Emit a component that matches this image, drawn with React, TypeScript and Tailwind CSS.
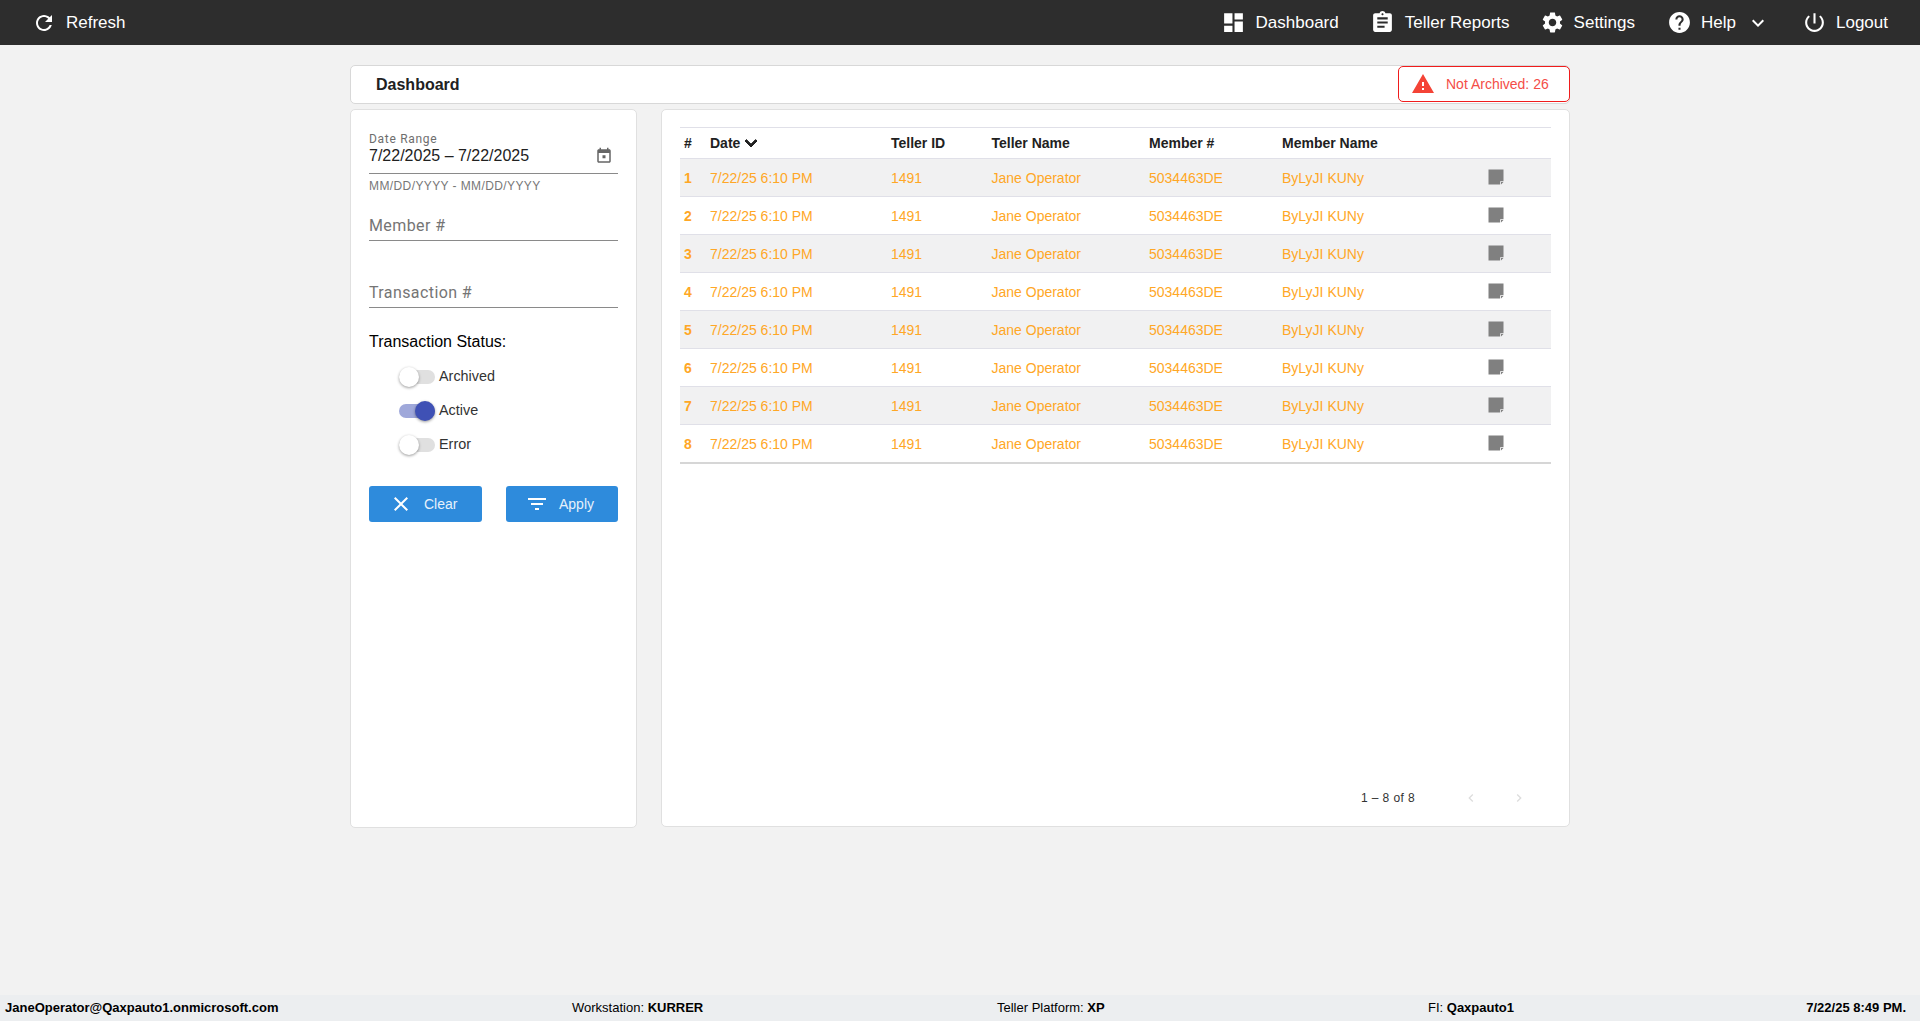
const icons = {
  refresh:
    "M17.65 6.35C16.2 4.9 14.21 4 12 4c-4.42 0-7.99 3.58-7.99 8s3.57 8 7.99 8c3.73 0 6.84-2.55 7.73-6h-2.08c-.82 2.33-3.04 4-5.65 4-3.31 0-6-2.69-6-6s2.69-6 6-6c1.66 0 3.14.69 4.22 1.78L13 11h7V4l-2.35 2.35z",
  dashboard: "M3 13h8V3H3v10zm0 8h8v-6H3v6zm10 0h8V11h-8v10zm0-18v6h8V3h-8z",
  assignment:
    "M19 3h-4.18C14.4 1.84 13.3 1 12 1c-1.3 0-2.4.84-2.82 2H5c-1.1 0-2 .9-2 2v14c0 1.1.9 2 2 2h14c1.1 0 2-.9 2-2V5c0-1.1-.9-2-2-2zm-7 0c.55 0 1 .45 1 1s-.45 1-1 1-1-.45-1-1 .45-1 1-1zm2 14H7v-2h7v2zm3-4H7v-2h10v2zm0-4H7V7h10v2z",
  settings:
    "M19.14 12.94c.04-.3.06-.61.06-.94 0-.32-.02-.64-.07-.94l2.03-1.58c.18-.14.23-.41.12-.61l-1.92-3.32c-.12-.22-.37-.29-.59-.22l-2.39.96c-.5-.38-1.03-.7-1.62-.94l-.36-2.54c-.04-.24-.24-.41-.48-.41h-3.84c-.24 0-.43.17-.47.41l-.36 2.54c-.59.24-1.13.57-1.62.94l-2.39-.96c-.22-.08-.47 0-.59.22L2.74 8.87c-.12.21-.08.47.12.61l2.03 1.58c-.05.3-.09.63-.09.94s.02.64.07.94l-2.03 1.58c-.18.14-.23.41-.12.61l1.92 3.32c.12.22.37.29.59.22l2.39-.96c.5.38 1.03.7 1.62.94l.36 2.54c.05.24.24.41.48.41h3.84c.24 0 .44-.17.47-.41l.36-2.54c.59-.24 1.13-.56 1.62-.94l2.39.96c.22.08.47 0 .59-.22l1.92-3.32c.12-.22.07-.47-.12-.61l-2.01-1.58zM12 15.6c-1.98 0-3.6-1.62-3.6-3.6s1.62-3.6 3.6-3.6 3.6 1.62 3.6 3.6-1.62 3.6-3.6 3.6z",
  help: "M12 2C6.48 2 2 6.48 2 12s4.48 10 10 10 10-4.48 10-10S17.52 2 12 2zm1 17h-2v-2h2v2zm2.07-7.75l-.9.92C13.45 12.9 13 13.5 13 15h-2v-.5c0-1.1.45-2.1 1.17-2.83l1.24-1.26c.37-.36.59-.86.59-1.41 0-1.1-.9-2-2-2s-2 .9-2 2H8c0-2.21 1.79-4 4-4s4 1.79 4 4c0 .88-.36 1.68-.93 2.25z",
  down: "M16.59 8.59L12 13.17 7.41 8.59 6 10l6 6 6-6z",
  power:
    "M13 3h-2v10h2V3zm4.83 2.17l-1.42 1.42C17.99 7.86 19 9.81 19 12c0 3.87-3.13 7-7 7s-7-3.13-7-7c0-2.19 1.01-4.14 2.58-5.42L6.17 5.17C4.23 6.82 3 9.26 3 12c0 4.97 4.03 9 9 9s9-4.03 9-9c0-2.74-1.23-5.18-3.17-6.83z",
  warning: "M1 21h22L12 2 1 21zm12-3h-2v-2h2v2zm0-4h-2v-4h2v4z",
  calendar:
    "M19 3h-1V1h-2v2H8V1H6v2H5c-1.11 0-1.99.9-1.99 2L3 19c0 1.1.89 2 2 2h14c1.1 0 2-.9 2-2V5c0-1.1-.9-2-2-2zm0 16H5V8h14v11zM10 11h4v4h-4z",
  close:
    "M19 6.41L17.59 5 12 10.59 6.41 5 5 6.41 10.59 12 5 17.59 6.41 19 12 13.41 17.59 19 19 17.59 13.41 12z",
  filter: "M10 18h4v-2h-4v2zM3 6v2h18V6H3zm3 7h12v-2H6v2z",
  note: "M3 3h18v14h-4v4H3z M18 18h3l-3 3z",
  left: "M15.41 7.41L14 6l-6 6 6 6 1.41-1.41L10.83 12z",
  right: "M10 6L8.59 7.41 13.17 12l-4.58 4.59L10 18l6-6z",
};

function Icon({ d, className }: { d: string; className: string }) {
  return (
    <svg viewBox="0 0 24 24" fill="currentColor" className={className}>
      <path d={d} />
    </svg>
  );
}

function NavItem({ d, label, wide }: { d: string; label: string; wide?: boolean }) {
  return (
    <div className={wide ? "flex items-center gap-[10px]" : "flex items-center gap-[9px]"}>
      <Icon d={d} className="w-[25px] h-[25px] text-white" />
      <span>{label}</span>
    </div>
  );
}

function Toggle({ label, on }: { label: string; on?: boolean }) {
  return (
    <div className="flex items-center h-[34px]">
      <div
        className={
          on
            ? "relative w-9 h-[14px] rounded-full bg-[#9fa8da]"
            : "relative w-9 h-[14px] rounded-full bg-[#e0e0e0]"
        }
      >
        <div
          className={
            on
              ? "absolute right-0 -top-[3px] w-5 h-5 rounded-full bg-[#3f51b5] shadow-[0_1px_3px_rgba(0,0,0,0.4)]"
              : "absolute left-0 -top-[3px] w-5 h-5 rounded-full bg-white shadow-[0_1px_3px_rgba(0,0,0,0.4)]"
          }
        />
      </div>
      <span className="ml-1 text-[14.4px] text-[#333]">{label}</span>
    </div>
  );
}

const rows = [1, 2, 3, 4, 5, 6, 7, 8];

export default function App() {
  return (
    <div className="h-[1021px] flex flex-col bg-[#f2f2f2] font-['Liberation_Sans',Arial,sans-serif] overflow-hidden">
      <header className="h-[45px] shrink-0 bg-[#2d2d2d] text-white text-[17px] flex items-center justify-between pl-[32px] pr-[32px]">
        <div className="flex items-center gap-[10px]">
          <Icon d={icons.refresh} className="w-6 h-6" />
          <span>Refresh</span>
        </div>
        <div className="flex items-center">
          <NavItem d={icons.dashboard} label="Dashboard" wide />
          <div className="ml-[31px]">
            <NavItem d={icons.assignment} label="Teller Reports" wide />
          </div>
          <div className="ml-[30px]">
            <NavItem d={icons.settings} label="Settings" />
          </div>
          <div className="ml-[32px]">
            <NavItem d={icons.help} label="Help" />
          </div>
          <Icon d={icons.down} className="w-6 h-6 ml-[10px]" />
          <div className="ml-[32px]">
            <NavItem d={icons.power} label="Logout" />
          </div>
        </div>
      </header>

      <main className="flex-1 w-[1220px] mx-auto pt-5">
        <div className="h-[39px] bg-white rounded-[5px] border border-[#d8d8d8] flex items-center justify-between pl-[25px]">
          <span className="text-base font-bold text-[#212121]">Dashboard</span>
          <div className="w-[172px] h-[36px] -mr-px mb-px border border-[#f01c1c] rounded-[5px] flex items-center pl-3 gap-[11px] text-sm text-[#f44d47]">
            <Icon d={icons.warning} className="w-6 h-6 text-[#f44336]" />
            <span>Not Archived: 26</span>
          </div>
        </div>

        <div className="flex gap-[24px] mt-[5px]">
          <aside className="w-[287px] h-[719px] shrink-0 bg-white rounded-[5px] border border-[#e0e0e0] px-[18px] pt-[22px]">
            <div className="font-['Roboto',sans-serif]">
              <div className="text-xs leading-[14px] tracking-[0.7px] text-[#6e6e6e]">Date Range</div>
              <div className="h-[28px] border-b border-[#8a8a8a] flex items-start justify-between font-['Liberation_Sans',sans-serif] text-base leading-[20px] text-[#212121]">
                <span>7/22/2025 – 7/22/2025</span>
                <Icon d={icons.calendar} className="w-[18px] h-[18px] mt-[1px] mr-[5px] text-[#666]" />
              </div>
              <div className="mt-[5px] text-xs leading-[14px] tracking-[0.4px] font-['Liberation_Sans',sans-serif] text-[#777]">
                MM/DD/YYYY - MM/DD/YYYY
              </div>
              <div className="mt-[21px] h-[27px] border-b border-[#8a8a8a] text-base leading-[24px] tracking-[0.4px] text-[#757575]">
                Member #
              </div>
              <div className="mt-[40px] h-[27px] border-b border-[#8a8a8a] text-base leading-[24px] tracking-[0.4px] text-[#757575]">
                Transaction #
              </div>
            </div>
            <div className="mt-[24px] text-base leading-5 text-black">Transaction Status:</div>
            <div className="mt-[8px] pl-[30px] flex flex-col">
              <Toggle label="Archived" />
              <Toggle label="Active" on />
              <Toggle label="Error" />
            </div>
            <div className="mt-[24px] flex justify-between">
              <button className="w-[113px] h-[36px] rounded-[3px] bg-[#2e8bdc] text-sm text-[#e6f1fb] flex items-center pl-[21px] gap-[11px]">
                <Icon d={icons.close} className="w-[24px] h-[24px] -ml-[1px] text-white" />
                <span>Clear</span>
              </button>
              <button className="w-[112px] h-[36px] rounded-[3px] bg-[#2e8bdc] text-sm text-[#e6f1fb] flex items-center pl-[19px] gap-[10px]">
                <Icon d={icons.filter} className="w-6 h-6 text-white" />
                <span>Apply</span>
              </button>
            </div>
          </aside>

          <section className="relative w-[909px] h-[718px] bg-white rounded-[5px] border border-[#e0e0e0] pt-[17px] px-[18px]">
            <table className="w-[871px] table-fixed border-collapse text-sm">
              <colgroup>
                <col className="w-[30px]" />
                <col className="w-[181px]" />
                <col className="w-[100.5px]" />
                <col className="w-[157.5px]" />
                <col className="w-[133px]" />
                <col className="w-[206px]" />
                <col />
              </colgroup>
              <thead>
                <tr className="h-[31px] border-t border-b border-[#e0e0e8] text-left font-bold text-[#212121]">
                  <th className="pl-1 font-bold">#</th>
                  <th className="font-bold">
                    <span className="inline-flex items-center">
                      Date
                      <Icon d={icons.down} className="w-6 h-6 -ml-[1px] -my-1 stroke-current stroke-[1px]" />
                    </span>
                  </th>
                  <th className="font-bold">Teller ID</th>
                  <th className="font-bold">Teller Name</th>
                  <th className="font-bold">Member #</th>
                  <th className="font-bold">Member Name</th>
                  <th />
                </tr>
              </thead>
              <tbody className="text-[#ffa726]">
                {rows.map((n) => (
                  <tr
                    key={n}
                    className={
                      n === 8
                        ? "h-[38px] border-b-2 border-[#d6d6d6] [&>td]:pt-px"
                        : n % 2 === 1
                          ? "h-[38px] border-b border-[#e0e0e8] bg-[#f1f1f2]"
                          : "h-[38px] border-b border-[#e0e0e8]"
                    }
                  >
                    <td className="pl-1 font-bold">{n}</td>
                    <td>7/22/25 6:10 PM</td>
                    <td>1491</td>
                    <td>Jane Operator</td>
                    <td>5034463DE</td>
                    <td>ByLyJI KUNy</td>
                    <td>
                      <Icon d={icons.note} className="w-5 h-5 -ml-[2px] -mt-[2px] text-[#808080]" />
                    </td>
                  </tr>
                ))}
              </tbody>
            </table>
            <div className="absolute right-[42px] top-[680px] flex items-center text-xs tracking-[0.4px] text-[#333]">
              <span className="font-medium">1 – 8 of 8</span>
              <Icon d={icons.left} className="w-4 h-4 ml-[48px] text-[#ddd]" />
              <Icon d={icons.right} className="w-4 h-4 ml-[32px] text-[#ddd]" />
            </div>
          </section>
        </div>
      </main>

      <footer className="h-[26px] shrink-0 bg-[#eceef0] text-[13px] text-black flex items-center pl-[5px] pr-[14px]">
        <span className="font-bold w-[567px]">JaneOperator@Qaxpauto1.onmicrosoft.com</span>
        <span className="w-[425px]">
          Workstation: <b>KURRER</b>
        </span>
        <span className="w-[431px]">
          Teller Platform: <b>XP</b>
        </span>
        <span>
          FI: <b>Qaxpauto1</b>
        </span>
        <span className="font-bold ml-auto">7/22/25 8:49 PM.</span>
      </footer>
    </div>
  );
}
